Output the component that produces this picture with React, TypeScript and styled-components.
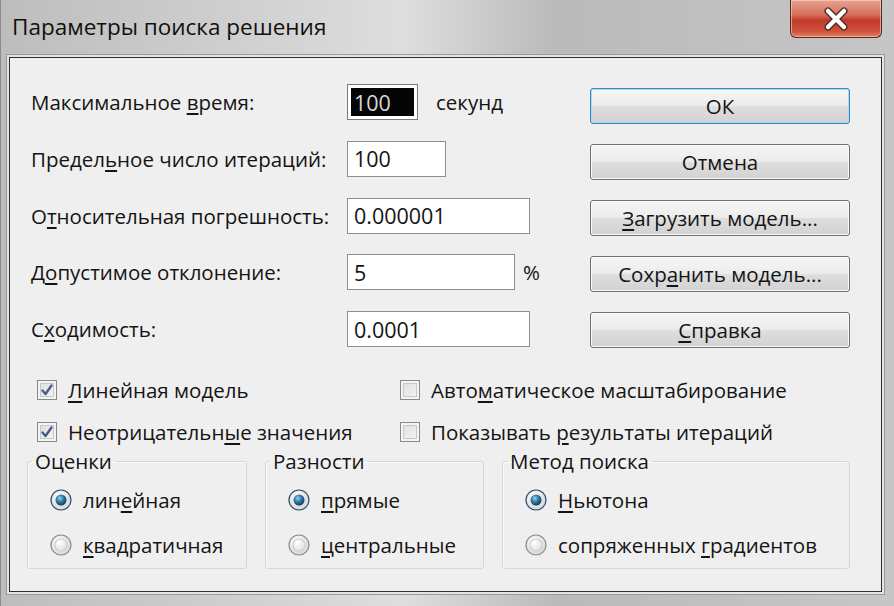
import React from "react";
import styled, { createGlobalStyle } from "styled-components";

const GlobalStyle = createGlobalStyle`
  html, body {
    margin: 0;
    padding: 0;
    background: #c2c2c2;
  }
  * {
    box-sizing: border-box;
  }
`;

const Window = styled.div`
  width: 894px;
  height: 606px;
  display: flex;
  flex-direction: column;
  background: linear-gradient(90deg, #bdbdbd 0%, #d2d2d2 30%, #dedede 45%, #bababa 62%, #c6c6c6 100%);
  border-left: 1px solid #8a8a8a;
  font-family: "Open Sans", "Noto Sans", sans-serif;
  color: #141414;
  overflow: hidden;
`;

const TitleBar = styled.div`
  height: 57px;
  display: flex;
  justify-content: space-between;
  align-items: flex-start;
  flex-shrink: 0;
`;

const Title = styled.div`
  font-size: 22.5px;
  padding: 11px 0 0 11px;
  color: #101010;
`;

const CloseButton = styled.div`
  width: 92px;
  height: 38px;
  margin-right: 12px;
  border: 1px solid #4a2a22;
  border-top: none;
  border-radius: 0 0 6px 6px;
  background: linear-gradient(180deg, #e8a393 0%, #d56f59 40%, #c0392a 55%, #d0543e 85%, #e57e62 100%);
  box-shadow: inset 0 0 0 1px rgba(255, 220, 210, 0.55);
  display: flex;
  align-items: center;
  justify-content: center;
`;

const Client = styled.div`
  flex: 1;
  margin: 0 12px 14px 8px;
  border: 1px solid #2e2e2e;
  background: #efefef;
  box-shadow: 0 0 0 2px #e4e4e4, 0 0 0 3px #9a9a9a;
  padding: 26px 0 0 17px;
  display: flex;
  flex-direction: column;
`;

const Top = styled.div`
  display: flex;
`;

const Fields = styled.div`
  display: grid;
  grid-template-columns: 320px auto;
  row-gap: 20px;
  width: 563px;
`;

const Label = styled.div`
  font-size: 20.5px;
  height: 36px;
  display: flex;
  align-items: center;
  padding-left: 4px;
  white-space: nowrap;
`;

const FieldCell = styled.div`
  display: flex;
  align-items: center;
  height: 36px;
`;

const Input = styled.div<{ $w: number; $selected?: boolean }>`
  width: ${(p) => p.$w}px;
  height: 36px;
  border: 1px solid #8e8e8e;
  background: #ffffff;
  font-size: 21.5px;
  display: flex;
  align-items: center;
  padding-left: 6px;
  ${(p) =>
    p.$selected &&
    `
    border-color: #7a7a7a;
    padding: 3px;
  `}
`;

const Selection = styled.span`
  background: #050505;
  color: #d8d8d8;
  display: flex;
  align-items: center;
  height: 100%;
  width: 100%;
  padding-left: 3px;
`;

const Suffix = styled.span<{ $gap: number }>`
  font-size: 20.5px;
  margin-left: ${(p) => p.$gap}px;
`;

const Buttons = styled.div`
  display: flex;
  flex-direction: column;
  gap: 20px;
  padding-top: 4px;
`;

const Button = styled.div<{ $default?: boolean }>`
  width: 260px;
  height: 36px;
  border: 1px solid ${(p) => (p.$default ? "#3a86b4" : "#6f6f6f")};
  border-radius: 3px;
  background: linear-gradient(180deg, #f6f6f6 0%, #ececec 48%, #dedede 52%, #d2d2d2 100%);
  box-shadow: inset 0 0 0 1px ${(p) => (p.$default ? "#a5dcef" : "#fbfbfb")};
  font-size: 20.5px;
  display: flex;
  align-items: center;
  justify-content: center;
  white-space: nowrap;
`;

const U = styled.span`
  text-decoration: underline;
  text-underline-offset: 3px;
  text-decoration-thickness: 1.5px;
`;

const Checks = styled.div`
  display: grid;
  grid-template-columns: 363px auto;
  row-gap: 14px;
  margin-top: 28px;
  padding-left: 10px;
`;

const CheckRow = styled.div`
  display: flex;
  align-items: center;
  gap: 11px;
  font-size: 20.5px;
  height: 28px;
  white-space: nowrap;
`;

const Box = styled.span`
  width: 20px;
  height: 20px;
  border: 1px solid #8a8a8a;
  background: linear-gradient(135deg, #dcdcdc, #f7f7f7);
  box-shadow: inset 0 0 0 2px #f4f4f4, inset 0 0 0 3px #c8c8c8;
  display: flex;
  align-items: center;
  justify-content: center;
`;

const Groups = styled.div`
  display: flex;
  gap: 18px;
  margin-top: 5px;
`;

const Group = styled.fieldset<{ $w: number }>`
  width: ${(p) => p.$w}px;
  margin: 0;
  height: 118px;
  border: 1px solid #d6d6d6;
  border-radius: 3px;
  box-shadow: inset 1px 1px 0 #fbfbfb;
  padding: 14px 0 0 22px;
  display: flex;
  flex-direction: column;
  gap: 15px;
`;

const Legend = styled.legend`
  font-size: 20.5px;
  padding: 0 3px;
  margin-left: -18px;
  line-height: 20px;
`;

const RadioRow = styled.div`
  display: flex;
  align-items: center;
  gap: 11px;
  font-size: 20.5px;
  height: 30px;
  white-space: nowrap;
`;

const Check = ({ on }: { on: boolean }) => (
  <Box>
    {on && (
      <svg width="14" height="14" viewBox="0 0 14 14">
        <path d="M2.5 7.5 L5.5 11 L11.5 2.5" fill="none" stroke="#4a5c8c" strokeWidth="2.4" strokeLinecap="round" strokeLinejoin="round" />
      </svg>
    )}
  </Box>
);

const Radio = ({ on }: { on: boolean }) => (
  <svg width="22" height="22" viewBox="0 0 22 22">
    <defs>
      <radialGradient id="rbg" cx="40%" cy="35%" r="70%">
        <stop offset="0%" stopColor="#ffffff" />
        <stop offset="100%" stopColor="#d4d4d4" />
      </radialGradient>
      <radialGradient id="rdot" cx="40%" cy="35%" r="70%">
        <stop offset="0%" stopColor="#9fd4ee" />
        <stop offset="45%" stopColor="#2f7fae" />
        <stop offset="100%" stopColor="#0d3550" />
      </radialGradient>
    </defs>
    <circle cx="11" cy="11" r="10" fill="url(#rbg)" stroke={on ? "#2d4d6a" : "#8c8c8c"} strokeWidth="1.2" />
    {on ? (
      <circle cx="11" cy="11" r="5.5" fill="url(#rdot)" />
    ) : (
      <circle cx="11" cy="11" r="6" fill="none" stroke="#cfcfcf" strokeWidth="1.2" />
    )}
  </svg>
);

export default function App() {
  return (
    <>
      <GlobalStyle />
      <Window>
        <TitleBar>
          <Title>Параметры поиска решения</Title>
          <CloseButton>
            <svg width="30" height="24" viewBox="0 0 30 24">
              <path d="M7 4 L23 20 M23 4 L7 20" stroke="#4b2a22" strokeWidth="7" strokeLinecap="round" />
              <path d="M7 4 L23 20 M23 4 L7 20" stroke="#ffffff" strokeWidth="4.5" strokeLinecap="round" />
            </svg>
          </CloseButton>
        </TitleBar>
        <Client>
          <Top>
            <Fields>
              <Label>
                Максимальное&nbsp;<U>в</U>ремя:
              </Label>
              <FieldCell>
                <Input $w={71} $selected>
                  <Selection>100</Selection>
                </Input>
                <Suffix $gap={18}>секунд</Suffix>
              </FieldCell>
              <Label>
                Предел<U>ь</U>ное число итераций:
              </Label>
              <FieldCell>
                <Input $w={99}>100</Input>
              </FieldCell>
              <Label>
                О<U>т</U>носительная погрешность:
              </Label>
              <FieldCell>
                <Input $w={183}>0.000001</Input>
              </FieldCell>
              <Label>
                Д<U>о</U>пустимое отклонение:
              </Label>
              <FieldCell>
                <Input $w={168}>5</Input>
                <Suffix $gap={8}>%</Suffix>
              </FieldCell>
              <Label>
                С<U>х</U>одимость:
              </Label>
              <FieldCell>
                <Input $w={183}>0.0001</Input>
              </FieldCell>
            </Fields>
            <Buttons>
              <Button $default>ОК</Button>
              <Button>Отмена</Button>
              <Button>
                <U>З</U>агрузить модель...
              </Button>
              <Button>
                Сохр<U>а</U>нить модель...
              </Button>
              <Button>
                <U>С</U>правка
              </Button>
            </Buttons>
          </Top>
          <Checks>
            <CheckRow>
              <Check on />
              <span>
                <U>Л</U>инейная модель
              </span>
            </CheckRow>
            <CheckRow>
              <Check on={false} />
              <span>
                Авто<U>м</U>атическое масштабирование
              </span>
            </CheckRow>
            <CheckRow>
              <Check on />
              <span>
                Неотрицательн<U>ы</U>е значения
              </span>
            </CheckRow>
            <CheckRow>
              <Check on={false} />
              <span>
                Показывать <U>р</U>езультаты итераций
              </span>
            </CheckRow>
          </Checks>
          <Groups>
            <Group $w={220}>
              <Legend>Оценки</Legend>
              <RadioRow>
                <Radio on />
                <span>
                  лин<U>е</U>йная
                </span>
              </RadioRow>
              <RadioRow>
                <Radio on={false} />
                <span>
                  <U>к</U>вадратичная
                </span>
              </RadioRow>
            </Group>
            <Group $w={219}>
              <Legend>Разности</Legend>
              <RadioRow>
                <Radio on />
                <span>
                  <U>п</U>рямые
                </span>
              </RadioRow>
              <RadioRow>
                <Radio on={false} />
                <span>
                  <U>ц</U>ентральные
                </span>
              </RadioRow>
            </Group>
            <Group $w={348}>
              <Legend>Метод поиска</Legend>
              <RadioRow>
                <Radio on />
                <span>
                  <U>Н</U>ьютона
                </span>
              </RadioRow>
              <RadioRow>
                <Radio on={false} />
                <span>
                  сопряженных <U>г</U>радиентов
                </span>
              </RadioRow>
            </Group>
          </Groups>
        </Client>
      </Window>
    </>
  );
}
